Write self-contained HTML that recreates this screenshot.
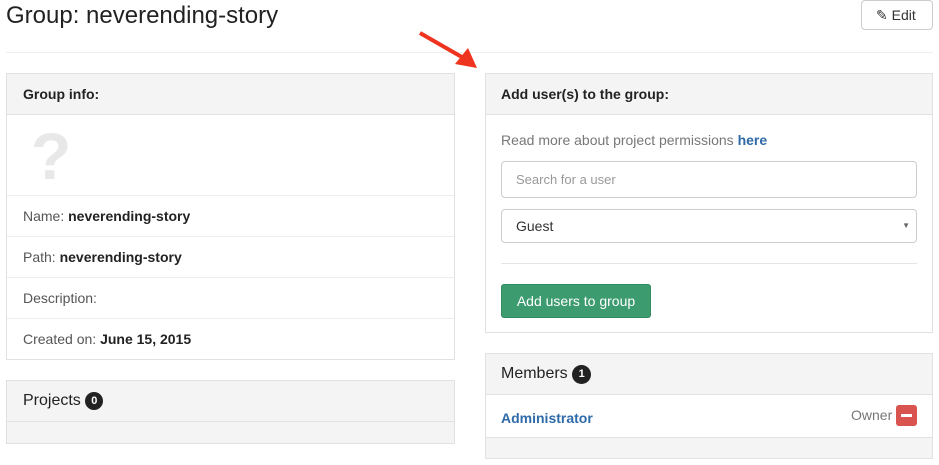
<!DOCTYPE html><html><head><style>
body{margin:0;width:939px;height:465px;overflow:hidden;background:#fff;font-family:"Liberation Sans",sans-serif;color:#333;font-size:14px;position:relative}
.a{position:absolute;box-sizing:border-box}
.p{border:1px solid #e1e1e1}
.h{background:#f4f4f4;border-bottom:1px solid #e1e1e1}
.row{border-bottom:1px solid #eee;color:#555;padding-left:16px;line-height:40px}
b{color:#222}
</style></head><body>
<div class="a" style="left:6px;top:2px;font-size:24px;color:#222">Group: neverending-story</div>
<div class="a" style="left:861px;top:0;width:72px;height:30px;border:1px solid #ccc;border-radius:4px;font-size:14px;line-height:28px;padding-left:14px;color:#333">✎ Edit</div>
<div class="a" style="left:6px;top:52px;width:927px;height:1px;background:#eee"></div>
<svg class="a" style="left:415px;top:28px" width="65" height="45"><line x1="5" y1="5" x2="52" y2="32" stroke="#f0331e" stroke-width="4"/><polygon points="62,40 40,36 53,20" fill="#f0331e"/></svg>

<div class="a p" style="left:6px;top:73px;width:449px;height:287px">
<div class="h" style="height:40px;font-weight:bold;font-size:14px;line-height:40px;padding-left:16px;color:#222">Group info:</div>
<div style="height:80px;border-bottom:1px solid #eee;position:relative"><div class="a" style="left:24px;top:6px;font-size:66px;font-weight:bold;color:#e8e8e8;line-height:70px">?</div></div>
<div class="row">Name: <b>neverending-story</b></div>
<div class="row">Path: <b>neverending-story</b></div>
<div class="row">Description:</div>
<div class="row" style="border:0">Created on: <b>June 15, 2015</b></div>
</div>
<div class="a p" style="left:6px;top:380px;width:449px;height:64px;background:#f4f4f4">
<div class="h" style="height:40px;font-size:16px;line-height:40px;padding-left:16px;color:#222;background:#f4f4f4">Projects <span style="display:inline-block;width:18px;height:18px;border-radius:9px;background:#222;color:#fff;font-size:11px;font-weight:bold;text-align:center;line-height:18px;vertical-align:1px">0</span></div>
</div>

<div class="a p" style="left:485px;top:73px;width:448px;height:260px">
<div class="h" style="height:40px;font-weight:bold;line-height:40px;padding-left:15px;color:#222">Add user(s) to the group:</div>
<div class="a" style="left:15px;top:58px;color:#777">Read more about project permissions <b style="color:#2e6aa8">here</b></div>
<div class="a" style="left:15px;top:87px;width:416px;height:37px;border:1px solid #ccc;border-radius:4px;color:#999;font-size:13px;line-height:35px;padding-left:14px">Search for a user</div>
<div class="a" style="left:15px;top:135px;width:416px;height:34px;border:1px solid #ccc;border-radius:4px;color:#333;line-height:32px;padding-left:14px">Guest<span style="position:absolute;right:6px;font-size:8px;color:#666">▼</span></div>
<div class="a" style="left:15px;top:189px;width:416px;height:1px;background:#e5e5e5"></div>
<div class="a" style="left:15px;top:210px;width:150px;height:34px;background:#3d9b70;border:1px solid #318a60;border-radius:3px;color:#fff;line-height:32px;text-align:center">Add users to group</div>
</div>

<div class="a p" style="left:485px;top:353px;width:448px;height:106px;background:#f4f4f4">
<div class="h" style="height:40px;font-size:16px;line-height:40px;padding-left:15px;color:#222">Members <span style="display:inline-block;width:19px;height:19px;border-radius:10px;background:#222;color:#fff;font-size:11px;font-weight:bold;text-align:center;line-height:19px;vertical-align:1px">1</span></div>
<div style="height:42px;background:#fff;border-bottom:1px solid #e1e1e1;position:relative">
<div class="a" style="left:15px;top:15px;font-weight:bold;color:#2e6aa8">Administrator</div>
<div class="a" style="left:365px;top:12px;color:#777">Owner</div>
<div class="a" style="left:410px;top:10px;width:21px;height:21px;background:#d9534f;border-radius:3px"><div class="a" style="left:5px;top:9px;width:11px;height:3px;background:#fff"></div></div>
</div></div>
</body></html>
